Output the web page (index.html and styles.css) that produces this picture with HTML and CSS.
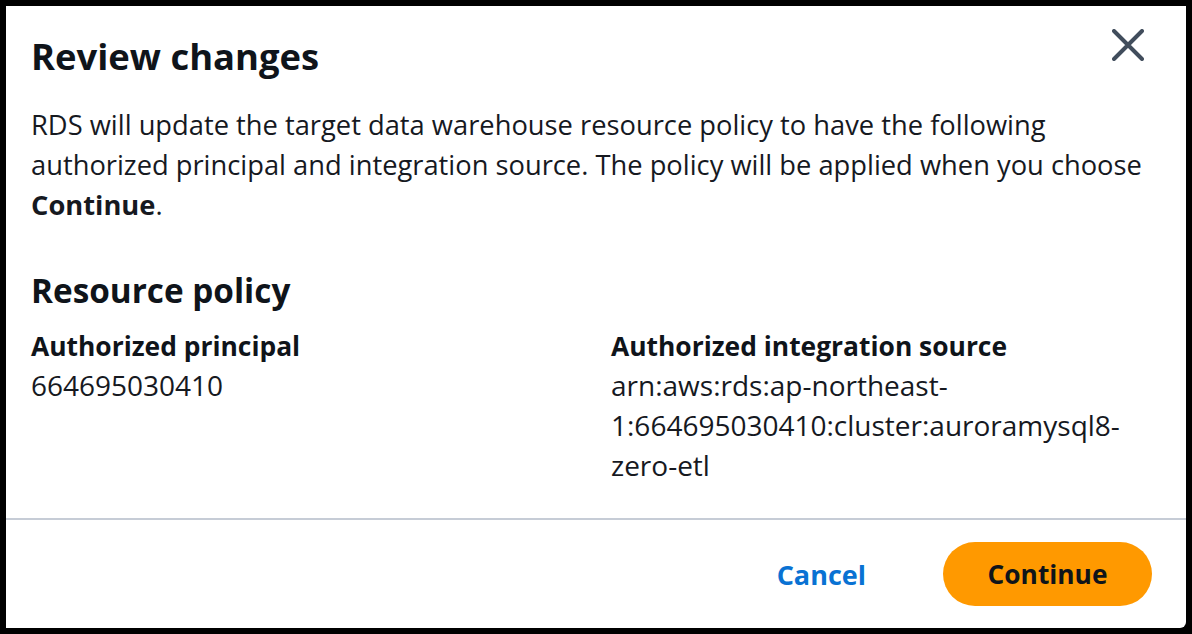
FILE: index.html
```html
<!DOCTYPE html>
<html>
<head>
<meta charset="utf-8">
<link rel="stylesheet" href="styles.css">
</head>
<body>
<div class="modal">
  <div class="header">
    <h2 class="title">Review changes</h2>
    <button class="close" aria-label="Close">
      <svg width="32" height="32" viewBox="0 0 32 32"><path d="M2 2 L30 30 M30 2 L2 30" stroke="#414d5c" stroke-width="4" stroke-linecap="round" fill="none"/></svg>
    </button>
  </div>
  <div class="content">
    <p class="intro">RDS will update the target data warehouse resource policy to have the following authorized principal and integration source. The policy will be applied when you choose <b>Continue</b>.</p>
    <h3 class="section">Resource policy</h3>
    <div class="cols">
      <div class="col">
        <div class="label">Authorized principal</div>
        <div class="value">664695030410</div>
      </div>
      <div class="col">
        <div class="label">Authorized integration source</div>
        <div class="value">arn:aws:rds:ap-northeast-1:664695030410:cluster:auroramysql8-zero-etl</div>
      </div>
    </div>
  </div>
  <div class="footer">
    <button class="link">Cancel</button>
    <button class="primary">Continue</button>
  </div>
</div>
</body>
</html>
```
FILE: styles.css
```css
html, body { margin: 0; padding: 0; }
body {
  background: #000;
  width: 1192px;
  height: 634px;
  padding: 6px;
  box-sizing: border-box;
  font-family: "Open Sans", "Noto Sans", sans-serif;
  color: #0f141a;
}
.modal {
  background: #fff;
  height: 622px;
  display: flex;
  flex-direction: column;
  border-radius: 0 0 6px 0;
}
.header {
  display: flex;
  justify-content: space-between;
  align-items: flex-start;
  padding: 26px 42px 0 25px;
}
.title {
  margin: 0;
  font-size: 36.4px;
  font-weight: 700;
  line-height: 48px;
}
.close {
  border: 0;
  background: none;
  padding: 0;
  margin-top: -3px;
  width: 32px;
  height: 32px;
}
.close svg { display: block; }
.content {
  padding: 0 25px;
  flex: 1;
}
.intro {
  margin: 25px 0 0;
  font-size: 27.3px;
  line-height: 40px;
  color: #16191f;
}
.intro b { font-weight: 700; }
.section {
  margin: 41px 0 0;
  font-size: 33.3px;
  font-weight: 700;
  line-height: 48px;
}
.cols {
  display: grid;
  grid-template-columns: 1fr 1fr;
  column-gap: 30px;
  margin-top: 13px;
}
.label {
  font-size: 26.4px;
  font-weight: 700;
  line-height: 38px;
}
.value {
  font-size: 28px;
  line-height: 40px;
  color: #16191f;
}
.footer {
  border-top: 2px solid #c6ccd6;
  display: flex;
  justify-content: flex-end;
  align-items: center;
  gap: 77px;
  padding: 0 34px 0 0;
  height: 108px;
}
.link {
  border: 0;
  background: none;
  font-family: inherit;
  font-size: 27px;
  font-weight: 700;
  color: #0972d3;
  padding: 0;
}
.primary {
  border: 0;
  background: #ff9900;
  color: #0f141a;
  font-family: inherit;
  font-size: 26.3px;
  font-weight: 700;
  height: 64px;
  width: 209px;
  border-radius: 32px;
}
```
